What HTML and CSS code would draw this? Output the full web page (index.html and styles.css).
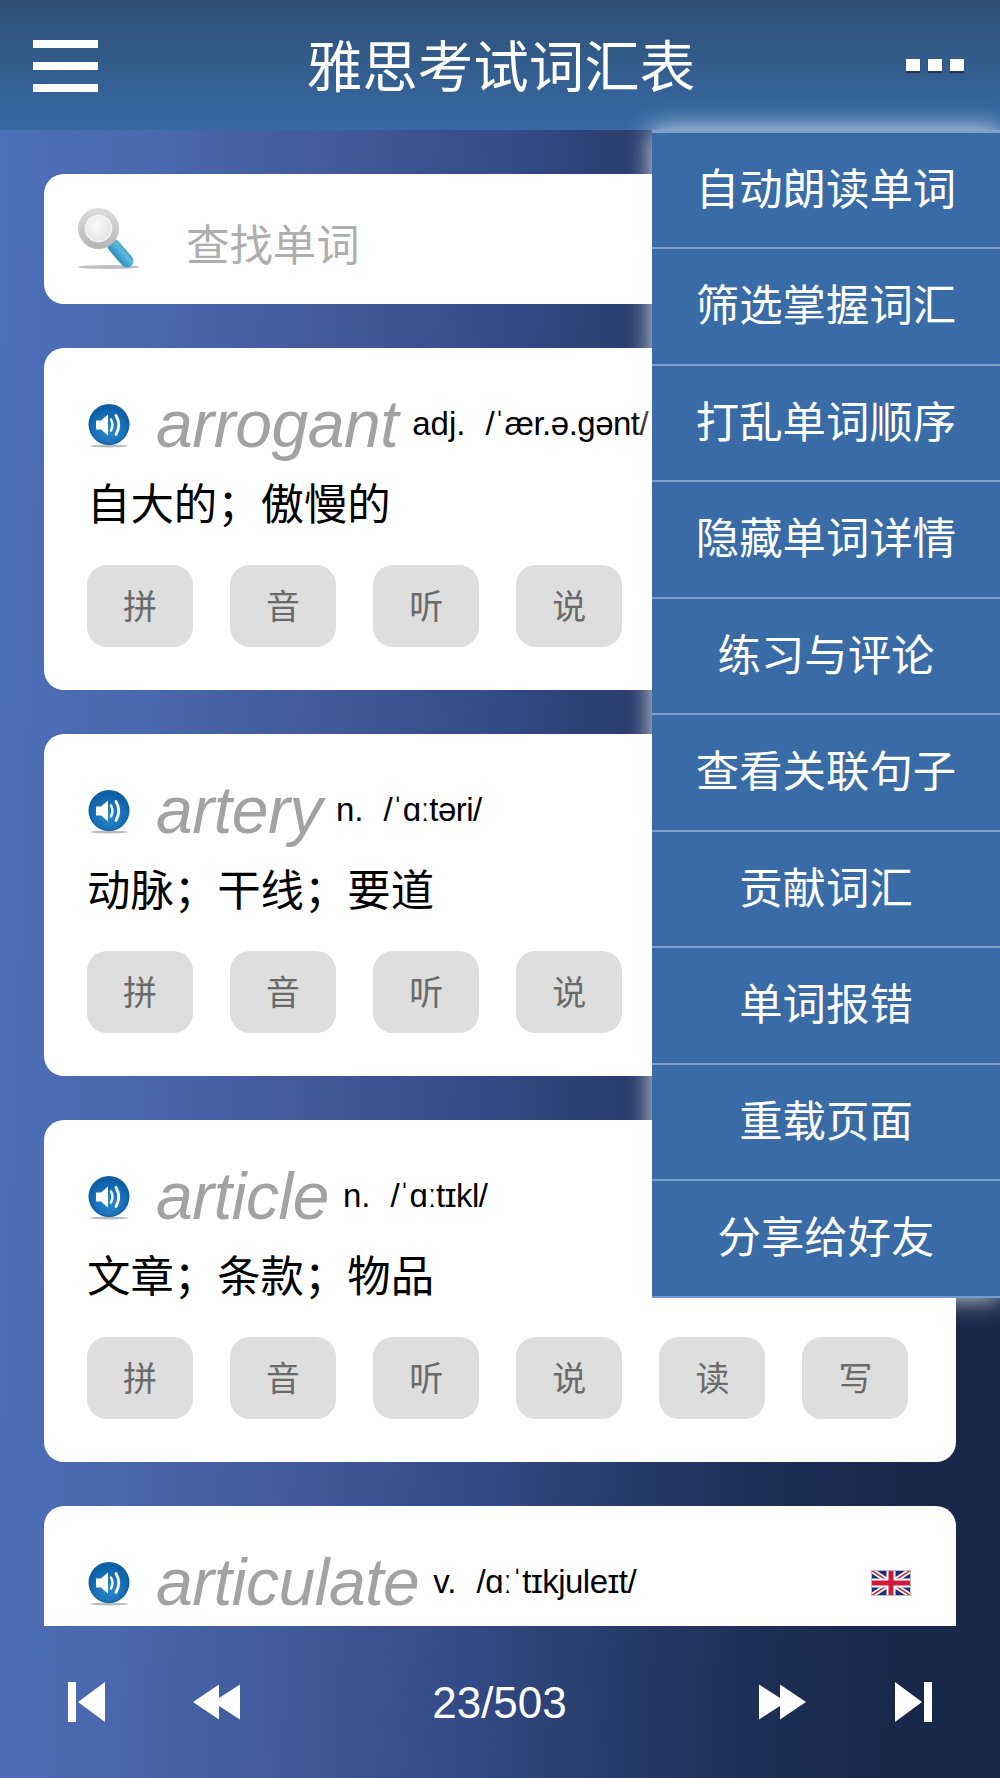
FILE: index.html
```html
<!DOCTYPE html>
<html lang="zh">
<head>
<meta charset="utf-8">
<title>雅思考试词汇表</title>
<link rel="stylesheet" href="styles.css">
</head>
<body>
<svg class="defs" aria-hidden="true">
  <defs>
    <radialGradient id="sp" cx="50%" cy="65%" r="62%">
      <stop offset="0" stop-color="#2b8bd0"/><stop offset="1" stop-color="#0c5ea6"/>
    </radialGradient>
    <linearGradient id="handle" gradientUnits="userSpaceOnUse" x1="40" y1="50" x2="52" y2="40">
      <stop offset="0" stop-color="#2f93c4"/><stop offset=".5" stop-color="#62b8dd"/><stop offset="1" stop-color="#2a86b8"/>
    </linearGradient>
    <linearGradient id="rim" x1="0" y1="0" x2="0" y2="1">
      <stop offset="0" stop-color="#dedede"/><stop offset="1" stop-color="#b5b5b5"/>
    </linearGradient>
    <radialGradient id="lens" cx="45%" cy="40%" r="60%">
      <stop offset="0" stop-color="#fbfbfb"/><stop offset="1" stop-color="#e4e4e4"/>
    </radialGradient>
    <symbol id="speaker" viewBox="0 0 42 44">
      <ellipse cx="21" cy="42" rx="19" ry="1.400" fill="#bbb"/>
      <circle cx="21" cy="20.500" r="20.500" fill="#0f5fa4"/>
      <circle cx="21" cy="21" r="19" fill="url(#sp)"/>
      <path d="M8 16.500h5l7-6v21l-7-6H8z" fill="#fff"/>
      <path d="M23 15.500q3 5.500 0 11" fill="none" stroke="#fff" stroke-width="2.400" stroke-linecap="round"/>
      <path d="M28 11.500q5.500 9.500 0 19" fill="none" stroke="#fff" stroke-width="2.800" stroke-linecap="round"/>
    </symbol>
    <symbol id="flag" viewBox="0 0 40 26">
      <rect width="40" height="26" fill="#1b2f78"/>
      <path d="M0 0L40 26M40 0L0 26" stroke="#fff" stroke-width="5"/>
      <path d="M0 0L40 26M40 0L0 26" stroke="#cc2b45" stroke-width="1.500"/>
      <path d="M20 0V26M0 13H40" stroke="#fff" stroke-width="9"/>
      <path d="M20 0V26M0 13H40" stroke="#d0183a" stroke-width="5"/>
      <rect x=".5" y=".5" width="39" height="25" fill="none" stroke="#bbb"/>
    </symbol>
  </defs>
</svg>

<header class="topbar">
  <div class="burger"><span></span><span></span><span></span></div>
  <h1 class="title">雅思考试词汇表</h1>
  <div class="dots"><span></span><span></span><span></span></div>
</header>

<main class="list">
  <div class="search">
    <svg class="search-icon" viewBox="0 0 62 62">
      <ellipse cx="31" cy="59" rx="31" ry="2" fill="#aaa" opacity=".75"/>
      <path d="M36 38l13 15" stroke="url(#handle)" stroke-width="13" stroke-linecap="round"/>
      <circle cx="20.500" cy="20.500" r="20.500" fill="url(#rim)"/>
      <circle cx="20.500" cy="20.500" r="13" fill="url(#lens)" stroke="#f4f4f4" stroke-width="1.500"/>
    </svg>
    <span class="search-text">查找单词</span>
  </div>

  <article class="card">
    <div class="head">
      <svg class="speaker"><use href="#speaker"/></svg>
      <span class="word">arrogant</span>
      <span class="meta"><span class="pos">adj.</span><span class="phon">/ˈær.ə.gənt/</span></span>
      <svg class="flag"><use href="#flag"/></svg>
    </div>
    <p class="meaning">自大的；傲慢的</p>
    <div class="skills"><span class="skill">拼</span><span class="skill">音</span><span class="skill">听</span><span class="skill">说</span></div>
  </article>

  <article class="card">
    <div class="head">
      <svg class="speaker"><use href="#speaker"/></svg>
      <span class="word">artery</span>
      <span class="meta"><span class="pos">n.</span><span class="phon">/ˈɑːtəri/</span></span>
      <svg class="flag"><use href="#flag"/></svg>
    </div>
    <p class="meaning">动脉；干线；要道</p>
    <div class="skills"><span class="skill">拼</span><span class="skill">音</span><span class="skill">听</span><span class="skill">说</span></div>
  </article>

  <article class="card">
    <div class="head">
      <svg class="speaker"><use href="#speaker"/></svg>
      <span class="word">article</span>
      <span class="meta"><span class="pos">n.</span><span class="phon">/ˈɑːtɪkl/</span></span>
      <svg class="flag"><use href="#flag"/></svg>
    </div>
    <p class="meaning">文章；条款；物品</p>
    <div class="skills"><span class="skill">拼</span><span class="skill">音</span><span class="skill">听</span><span class="skill">说</span><span class="skill">读</span><span class="skill">写</span></div>
  </article>

  <article class="card">
    <div class="head">
      <svg class="speaker"><use href="#speaker"/></svg>
      <span class="word">articulate</span>
      <span class="meta"><span class="pos">v.</span><span class="phon">/ɑːˈtɪkjuleɪt/</span></span>
      <svg class="flag"><use href="#flag"/></svg>
    </div>
  </article>
</main>

<footer class="pager">
  <svg class="ctl" viewBox="0 0 60 60"><path d="M2 10h8v40H2zM39 10v40L12 30z"/></svg>
  <svg class="ctl" viewBox="0 0 60 60"><path d="M6 30l26-17.500v13.500l21-13.500v35L32 34v13.500z"/></svg>
  <span class="count">23/503</span>
  <svg class="ctl" viewBox="0 0 60 60"><path d="M54 30L28 12.500v13.500L7 12.500v35L28 34v13.500z"/></svg>
  <svg class="ctl" viewBox="0 0 60 60"><path d="M58 10h-8v40h8zM21 10v40l27-20z"/></svg>
</footer>

<nav class="menu">
  <a class="item">自动朗读单词</a>
  <a class="item">筛选掌握词汇</a>
  <a class="item">打乱单词顺序</a>
  <a class="item">隐藏单词详情</a>
  <a class="item">练习与评论</a>
  <a class="item">查看关联句子</a>
  <a class="item">贡献词汇</a>
  <a class="item">单词报错</a>
  <a class="item">重载页面</a>
  <a class="item">分享给好友</a>
</nav>
</body>
</html>
```
FILE: styles.css
```css
* { box-sizing: border-box; }
html, body { margin: 0; padding: 0; }
body {
  position: relative;
  width: 1000px;
  height: 1778px;
  overflow: hidden;
  display: flex;
  flex-direction: column;
  font-family: "Liberation Sans", "Noto Sans CJK SC", sans-serif;
  background: linear-gradient(92deg, #4e70ba 0%, #4a68b0 15%, #3f5896 35%, #324a85 50%, #2a3f70 60%, #1f3058 75%, #18284b 90%, #18284b 100%);
}
.defs { width: 0; height: 0; flex: none; }

.topbar {
  flex: none;
  height: 130px;
  padding: 0 36px 0 33px;
  display: flex;
  align-items: center;
  justify-content: space-between;
  background: linear-gradient(180deg, #2f5075 0%, #3769a4 100%);
}
.burger { width: 65px; display: flex; flex-direction: column; gap: 14px; margin-top: 1px; }
.burger span { display: block; height: 8px; background: #fff; }
.title {
  margin: 0 2px 2px 0;
  font-family: "Noto Sans CJK SC", sans-serif;
  font-weight: 400;
  font-size: 55.5px;
  line-height: 1;
  color: #fff;
}
.dots { width: 58px; display: flex; justify-content: space-between; }
.dots span { width: 14px; height: 12px; background: #fff; box-shadow: 0 2px 1px rgba(20, 30, 50, .6); }

.list {
  flex: none;
  height: 1496px;
  overflow: hidden;
  padding: 44px 44px 0;
  display: flex;
  flex-direction: column;
  gap: 44px;
}
.search {
  flex: none;
  height: 130px;
  border-radius: 20px;
  background: #fff;
  padding: 0 0 0 34px;
  display: flex;
  align-items: center;
  gap: 46px;
}
.search-icon { width: 62px; height: 62px; flex: none; }
.search-text {
  font-family: "Noto Sans CJK SC", sans-serif;
  font-size: 43.4px;
  color: #aeaeae;
  padding-top: 6px;
}
.card {
  flex: none;
  background: #fff;
  border-radius: 20px;
  padding: 41px 43px 43px;
  overflow: hidden;
}
.head { height: 72px; display: flex; align-items: center; }
.speaker { width: 42px; height: 44px; flex: none; margin: 1px 26px 0 1px; }
.word {
  font-size: 66px;
  line-height: 72px;
  font-style: italic;
  color: #a2a2a2;
  letter-spacing: -.45px;
  margin: -2px 14px 0 0;
  white-space: nowrap;
}
.meta { font-size: 33px; color: #000; white-space: nowrap; margin-top: -2px; }
.pos { margin-right: 20px; }
.phon { letter-spacing: -.5px; }
.flag { width: 40px; height: 26px; flex: none; margin-left: auto; margin-right: 2px; }
.meaning {
  margin: 10px 0 34px;
  font-family: "Noto Sans CJK SC", sans-serif;
  font-size: 43.4px;
  line-height: 60px;
  color: #000;
}
.skills { display: flex; gap: 37.1px; }
.skill {
  width: 106px;
  height: 82px;
  padding-bottom: 4px;
  border-radius: 20px;
  background: #dedede;
  color: #6a6a6a;
  font-family: "Noto Sans CJK SC", sans-serif;
  font-size: 34px;
  display: flex;
  align-items: center;
  justify-content: center;
}

.pager {
  flex: none;
  height: 152px;
  padding: 0 66px;
  display: flex;
  align-items: center;
  justify-content: space-between;
}
.ctl { width: 60px; height: 60px; fill: #fff; }
.ctl:nth-child(2) { margin-left: 61px; }
.ctl:nth-child(4) { margin-right: 62px; }
.count { flex: 1; text-align: center; font-size: 44px; color: #fff; margin-top: 1px; }

.menu {
  position: absolute;
  top: 130px;
  right: 0;
  width: 348px;
  background: #396ba6;
  box-shadow: 0 0 24px rgba(255, 255, 255, .85);
  display: flex;
  flex-direction: column;
  border-bottom: 2px solid #6f9bcf;
}
.item {
  height: 116.5px;
  padding-bottom: 8px;
  border-top: 2px solid #7fa1c9;
  color: #fff;
  font-family: "Noto Sans CJK SC", sans-serif;
  font-size: 43.4px;
  display: flex;
  align-items: center;
  justify-content: center;
}
.item:first-child { height: 117px; border-top-width: 3px; }
```
